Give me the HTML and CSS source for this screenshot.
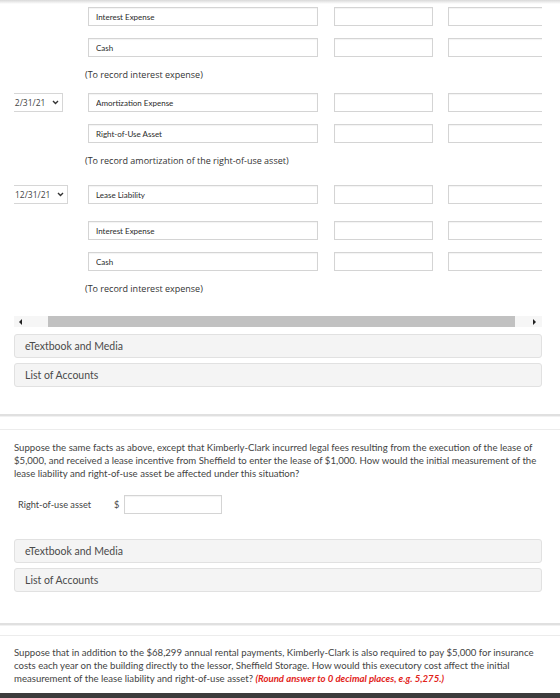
FILE: index.html
```html
<!DOCTYPE html>
<html>

<head>
    <title>Lease Accounting</title>
    <meta charset="utf-8">
    <meta name="viewport" content="width=device-width, initial-scale=1.0">
    <link rel="stylesheet" href="styles.css">
</head>

<body>

    <div class="top-shade"></div>

    <section class="sheet">
        <div class="journal">

            <div class="entry">
                <div class="row">
                    <div class="date"></div>
                    <input class="field acct" type="text" value="Interest Expense">
                    <input class="field amt" type="text">
                    <input class="field amt last" type="text">
                </div>
                <div class="row">
                    <div class="date"></div>
                    <input class="field acct" type="text" value="Cash">
                    <input class="field amt" type="text">
                    <input class="field amt last" type="text">
                </div>
                <p class="note">(To record interest expense)</p>
            </div>

            <div class="entry">
                <div class="row">
                    <div class="date">
                        <div class="select cut">12/31/21
                            <svg class="chev" width="7" height="5" viewBox="0 0 7 5"><path d="M1 1l2.5 2.5L6 1" fill="none" stroke="#333" stroke-width="1.4"/></svg>
                        </div>
                    </div>
                    <input class="field acct" type="text" value="Amortization Expense">
                    <input class="field amt" type="text">
                    <input class="field amt last" type="text">
                </div>
                <div class="row">
                    <div class="date"></div>
                    <input class="field acct" type="text" value="Right-of-Use Asset">
                    <input class="field amt" type="text">
                    <input class="field amt last" type="text">
                </div>
                <p class="note">(To record amortization of the right-of-use asset)</p>
            </div>

            <div class="entry entry-spaced">
                <div class="row row-wide">
                    <div class="date">
                        <div class="select">12/31/21
                            <svg class="chev" width="7" height="5" viewBox="0 0 7 5"><path d="M1 1l2.5 2.5L6 1" fill="none" stroke="#333" stroke-width="1.4"/></svg>
                        </div>
                    </div>
                    <input class="field acct" type="text" value="Lease Liability">
                    <input class="field amt" type="text">
                    <input class="field amt last" type="text">
                </div>
                <div class="row">
                    <div class="date"></div>
                    <input class="field acct" type="text" value="Interest Expense">
                    <input class="field amt" type="text">
                    <input class="field amt last" type="text">
                </div>
                <div class="row">
                    <div class="date"></div>
                    <input class="field acct" type="text" value="Cash">
                    <input class="field amt" type="text">
                    <input class="field amt last" type="text">
                </div>
                <p class="note">(To record interest expense)</p>
            </div>

        </div>

        <div class="hscroll">
            <span class="arrow arrow-left"></span>
            <span class="thumb"></span>
            <span class="arrow arrow-right"></span>
        </div>

        <div class="panel panel-first">eTextbook and Media</div>
        <div class="panel">List of Accounts</div>
    </section>

    <div class="divider"></div>

    <section class="sheet part">
        <p class="question">Suppose the same facts as above, except that Kimberly-Clark incurred legal fees resulting from the execution of the lease of $5,000, and received a lease incentive from Sheffield to enter the lease of $1,000. How would the initial measurement of the lease liability and right-of-use asset be affected under this situation?</p>

        <div class="answer">
            <span class="answer-label">Right-of-use asset</span>
            <span class="dollar">$</span>
            <input class="field money" type="text">
        </div>

        <div class="panel panel-first">eTextbook and Media</div>
        <div class="panel">List of Accounts</div>
    </section>

    <div class="divider divider-low"></div>

    <section class="sheet part part-last">
        <p class="question">Suppose that in addition to the $68,299 annual rental payments, Kimberly-Clark is also required to pay $5,000 for insurance costs each year on the building directly to the lessor, Sheffield Storage. How would this executory cost affect the initial measurement of the lease liability and right-of-use asset? <em class="hint">(Round answer to 0 decimal places, e.g. 5,275.)</em></p>
    </section>

    <div class="bottom-bar"></div>

</body>

</html>
```

FILE: styles.css
```css
body {
    margin: 0;
    background: #fff;
    font-family: Lato, "Liberation Sans", sans-serif;
    color: #333;
}

.top-shade {
    height: 4px;
    background: linear-gradient(#d9d9d9, #fff);
}

.sheet {
    padding: 0 18px 0 14px;
}

/* journal table */

.journal {
    overflow: hidden;
    padding-top: 3px;
}

.row {
    display: flex;
    height: 19px;
    margin-bottom: 12px;
}

.row-wide {
    margin-bottom: 17px;
}

.entry-spaced {
    padding-top: 6px;
}

.date {
    width: 74px;
    flex: none;
}

.select {
    box-sizing: border-box;
    width: 54px;
    height: 19px;
    border: 1px solid #d6d6d6;
    border-left: none;
    display: flex;
    align-items: center;
    justify-content: space-between;
    padding: 0 3px 0 1px;
    font-family: "Open Sans", sans-serif;
    font-size: 8.5px;
    color: #444;
}

.select.cut {
    margin-left: -5px;
}

.field {
    box-sizing: border-box;
    flex: none;
    height: 19px;
    margin: 0;
    border: 1px solid #d4d4d4;
    box-shadow: inset 0 1px 1px rgba(0, 0, 0, 0.05);
    padding: 0 0 0 7px;
    font-family: Lato, sans-serif;
    font-size: 8px;
    color: #2b2b2b;
    background: #fff;
    outline: none;
}

.acct {
    width: 230px;
    margin-right: 16px;
}

.amt {
    width: 99px;
    margin-right: 15px;
}

.amt.last {
    width: 110px;
    margin-right: 0;
}

.note {
    margin: 0 0 12px 71px;
    font-family: "Open Sans", sans-serif;
    font-size: 9px;
    line-height: 12px;
    color: #333;
}

/* scrollbar under the table */

.hscroll {
    display: flex;
    align-items: center;
    height: 11px;
    margin-top: 9px;
    background: #f6f6f6;
}

.arrow {
    width: 0;
    height: 0;
    border-top: 3px solid transparent;
    border-bottom: 3px solid transparent;
}

.arrow-left {
    margin-left: 5px;
    border-right: 3px solid #222;
}

.arrow-right {
    margin-left: 18px;
    border-left: 3px solid #222;
}

.thumb {
    height: 11px;
    width: 467px;
    margin-left: 26px;
    background: #c1c1c1;
}

/* collapsible links */

.panel {
    box-sizing: border-box;
    height: 24px;
    margin-top: 5px;
    padding-left: 10px;
    display: flex;
    align-items: center;
    border: 1px solid #e1e1e1;
    border-radius: 3px;
    background: #f4f4f4;
    font-size: 10.5px;
    color: #4a4a4a;
}

.panel-first {
    margin-top: 7px;
}

.divider {
    height: 2px;
    margin-top: 27px;
    background: #e0e0e0;
    border-bottom: 1px solid #f1f1f1;
}

.divider-low {
    margin-top: 31px;
}

/* question parts */

.part {
    margin-top: 12px;
    border-top: 1px solid #ececec;
}

.part-last {
    margin-top: 9px;
}

.question {
    margin: 0;
    padding-top: 12px;
    font-size: 9.6px;
    line-height: 12.8px;
    color: #444;
}

.part-last .question {
    padding-top: 11px;
}

.hint {
    font-weight: 700;
    color: #e2231a;
    padding-right: 1px;
}

.answer {
    display: flex;
    align-items: center;
    margin-top: 15px;
    margin-left: 4px;
    font-size: 9.2px;
    color: #444;
}

.answer-label {
    width: 96px;
}

.dollar {
    width: 10px;
}

.money {
    width: 98px;
}

.part .panel-first {
    margin-top: 25px;
}

.bottom-bar {
    height: 5px;
    margin-top: 7px;
    background: #3c3c3c;
}
```
